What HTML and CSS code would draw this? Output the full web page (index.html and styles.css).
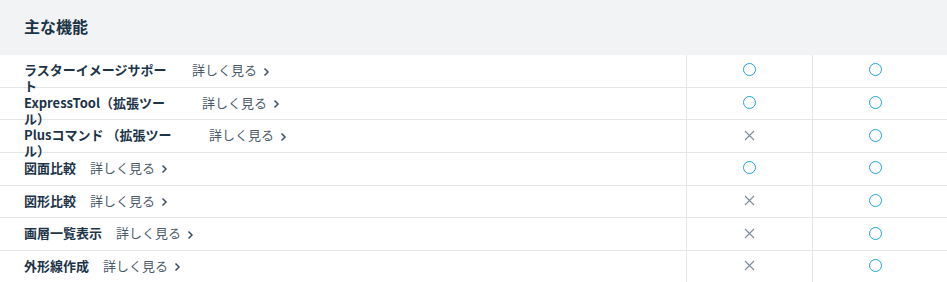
FILE: index.html
```html
<!DOCTYPE html>
<html lang="ja">
<head>
<meta charset="utf-8">
<link rel="stylesheet" href="styles.css">
</head>
<body>
<section class="features">
  <div class="features-head">主な機能</div>
  <div class="row">
    <div class="name-cell"><span class="label w-raster">ラスターイメージサポート</span><a class="more">詳しく見る<svg class="chev" width="7" height="10" viewBox="0 0 7 10"><path d="M1.5 1.5 L5 5 L1.5 8.5" fill="none" stroke="#3b5063" stroke-width="1.5"/></svg></a></div>
    <div class="mark-cell"><span class="yes"></span></div>
    <div class="mark-cell"><span class="yes"></span></div>
  </div>
  <div class="row">
    <div class="name-cell"><span class="label w-express">ExpressTool（拡張ツール）</span><a class="more">詳しく見る<svg class="chev" width="7" height="10" viewBox="0 0 7 10"><path d="M1.5 1.5 L5 5 L1.5 8.5" fill="none" stroke="#3b5063" stroke-width="1.5"/></svg></a></div>
    <div class="mark-cell"><span class="yes"></span></div>
    <div class="mark-cell"><span class="yes"></span></div>
  </div>
  <div class="row">
    <div class="name-cell"><span class="label w-plus">Plusコマンド （拡張ツール）</span><a class="more">詳しく見る<svg class="chev" width="7" height="10" viewBox="0 0 7 10"><path d="M1.5 1.5 L5 5 L1.5 8.5" fill="none" stroke="#3b5063" stroke-width="1.5"/></svg></a></div>
    <div class="mark-cell"><svg class="no" width="11" height="11" viewBox="0 0 11 11"><path d="M1 1 L10 10 M10 1 L1 10" stroke="#7d8c9a" stroke-width="1.1"/></svg></div>
    <div class="mark-cell"><span class="yes"></span></div>
  </div>
  <div class="row">
    <div class="name-cell"><span class="label">図面比較</span><a class="more">詳しく見る<svg class="chev" width="7" height="10" viewBox="0 0 7 10"><path d="M1.5 1.5 L5 5 L1.5 8.5" fill="none" stroke="#3b5063" stroke-width="1.5"/></svg></a></div>
    <div class="mark-cell"><span class="yes"></span></div>
    <div class="mark-cell"><span class="yes"></span></div>
  </div>
  <div class="row">
    <div class="name-cell"><span class="label">図形比較</span><a class="more">詳しく見る<svg class="chev" width="7" height="10" viewBox="0 0 7 10"><path d="M1.5 1.5 L5 5 L1.5 8.5" fill="none" stroke="#3b5063" stroke-width="1.5"/></svg></a></div>
    <div class="mark-cell"><svg class="no" width="11" height="11" viewBox="0 0 11 11"><path d="M1 1 L10 10 M10 1 L1 10" stroke="#7d8c9a" stroke-width="1.1"/></svg></div>
    <div class="mark-cell"><span class="yes"></span></div>
  </div>
  <div class="row">
    <div class="name-cell"><span class="label">画層一覧表示</span><a class="more">詳しく見る<svg class="chev" width="7" height="10" viewBox="0 0 7 10"><path d="M1.5 1.5 L5 5 L1.5 8.5" fill="none" stroke="#3b5063" stroke-width="1.5"/></svg></a></div>
    <div class="mark-cell"><svg class="no" width="11" height="11" viewBox="0 0 11 11"><path d="M1 1 L10 10 M10 1 L1 10" stroke="#7d8c9a" stroke-width="1.1"/></svg></div>
    <div class="mark-cell"><span class="yes"></span></div>
  </div>
  <div class="row">
    <div class="name-cell"><span class="label">外形線作成</span><a class="more">詳しく見る<svg class="chev" width="7" height="10" viewBox="0 0 7 10"><path d="M1.5 1.5 L5 5 L1.5 8.5" fill="none" stroke="#3b5063" stroke-width="1.5"/></svg></a></div>
    <div class="mark-cell"><svg class="no" width="11" height="11" viewBox="0 0 11 11"><path d="M1 1 L10 10 M10 1 L1 10" stroke="#7d8c9a" stroke-width="1.1"/></svg></div>
    <div class="mark-cell"><span class="yes"></span></div>
  </div>
</section>
</body>
</html>
```
FILE: styles.css
```css
html, body {
  margin: 0;
  padding: 0;
  background: #ffffff;
}
body {
  font-family: "Noto Sans CJK JP", "Noto Sans", sans-serif;
  color: #1c3448;
  overflow: hidden;
}
.features-head {
  height: 55px;
  box-sizing: border-box;
  background: #f2f3f5;
  padding-left: 24px;
  display: flex;
  align-items: center;
  font-size: 16px;
  font-weight: 700;
  line-height: 1;
  padding-bottom: 3px;
}
.row {
  display: grid;
  grid-template-columns: 686px 126px 126px 1fr;
  grid-template-rows: minmax(0, 1fr);
  height: 32.67px;
  box-sizing: border-box;
  border-bottom: 1px solid #e2e6e9;
}
.name-cell {
  display: flex;
  align-items: flex-start;
  padding-left: 24px;
  padding-top: 7px;
  font-size: 13px;
  line-height: 16px;
  min-width: 0;
  min-height: 0;
}
.label {
  font-weight: 700;
  flex: 0 0 auto;
  color: #1c3448;
}
.w-raster { width: 154px; }
.w-express { width: 145px; margin-right: 19px; }
.w-plus { width: 150px; margin-right: 21px; }
.more {
  margin-left: 14px;
  color: #4a5a6a;
  white-space: nowrap;
  display: flex;
  align-items: center;
}
.chev {
  margin-left: 6px;
  margin-top: 3px;
}
.mark-cell {
  border-left: 1px solid #e2e6e9;
  display: flex;
  align-items: center;
  justify-content: center;
  padding-bottom: 2px;
}
.yes {
  width: 13px;
  height: 13px;
  box-sizing: border-box;
  border: 1.8px solid #1ea2e2;
  border-radius: 50%;
}
```
